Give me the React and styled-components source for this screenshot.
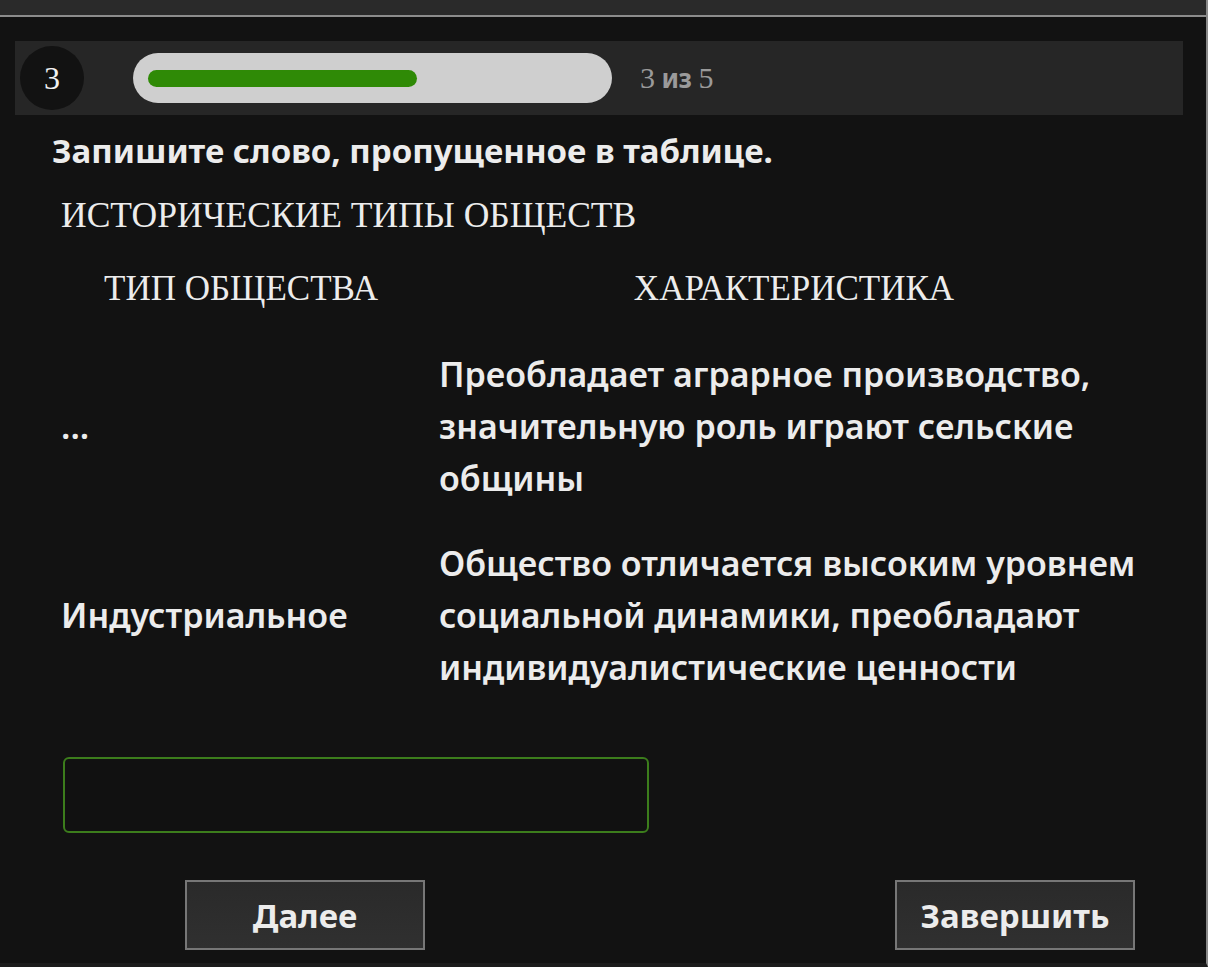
import React from "react";
import styled, { createGlobalStyle } from "styled-components";

const Global = createGlobalStyle`
  html, body { margin: 0; padding: 0; background: #121212; }
  body { font-family: "Noto Sans", "Open Sans", sans-serif; color: #e8e8e8; }
  * { box-sizing: border-box; }
`;

const Page = styled.div`
  width: 1208px;
  height: 967px;
  background: #121212;
  border-right: 2px solid #8a8a8a;
  border-bottom: 4px solid #1c1c1c;
  display: flex;
  flex-direction: column;
  overflow: hidden;
`;

const TopStrip = styled.div`
  height: 17px;
  flex: none;
  background: #2a2a2a;
  border-bottom: 2px solid #8c8c8c;
`;

const Content = styled.div`
  display: flex;
  flex-direction: column;
  padding: 24px 23px 0 15px;
`;

const Header = styled.div`
  height: 74px;
  background: #262626;
  display: flex;
  align-items: center;
  padding: 0 0 0 5px;
`;

const Circle = styled.div`
  width: 64px;
  height: 64px;
  border-radius: 50%;
  background: #121212;
  display: flex;
  align-items: center;
  justify-content: center;
  font-family: "Liberation Serif", serif;
  font-size: 32px;
  color: #f2f2f2;
`;

const Track = styled.div`
  margin-left: 49px;
  width: 479px;
  height: 50px;
  border-radius: 25px;
  background: #cfcfcf;
  display: flex;
  align-items: center;
  padding: 0 15px;
`;

const Fill = styled.div`
  height: 17px;
  border-radius: 9px;
  background: #2f8a06;
`;

const Counter = styled.div`
  margin-left: 28px;
  font-family: "Liberation Serif", serif;
  font-size: 30px;
  color: #9a9a9a;
  letter-spacing: -0.5px;
  b { font-family: "Noto Sans", sans-serif; font-weight: 700; font-size: 26px; }
`;

const Title = styled.div`
  margin: 14px 0 0 37px;
  font-size: 33px;
  font-weight: 700;
  line-height: 44px;
  color: #ececec;
`;

const Subtitle = styled.div`
  margin: 20px 0 0 46px;
  font-family: "Liberation Serif", serif;
  font-size: 35.5px;
  line-height: 44px;
  color: #ececec;
`;

const Table = styled.div`
  margin: 27px 0 0 37px;
  width: 1106px;
  display: grid;
  grid-template-columns: 378px 1fr;
  row-gap: 33px;
`;

const HeadCell = styled.div`
  padding: 0 9px;
  text-align: center;
  font-family: "Liberation Serif", serif;
  font-size: 35px;
  line-height: 50px;
  color: #ececec;
  margin-bottom: 1px;
`;

const Cell = styled.div`
  padding: 0 9px;
  display: flex;
  align-items: center;
  font-size: 34px;
  font-weight: 600;
  line-height: 52px;
  color: #ececec;
`;

const AnswerBox = styled.input`
  margin: 64px 0 0 48px;
  width: 586px;
  height: 76px;
  border: 2px solid #3c7d1c;
  border-radius: 6px;
  background: #111111;
  outline: none;
  color: #ececec;
  font-size: 28px;
  padding: 0 14px;
`;

const Buttons = styled.div`
  margin: 47px 0 0 170px;
  width: 950px;
  display: flex;
  justify-content: space-between;
`;

const Button = styled.button`
  width: 240px;
  height: 70px;
  background: linear-gradient(#2a2a2a, #303030);
  border: 2px solid #777777;
  color: #ececec;
  font-family: "Noto Sans", sans-serif;
  font-size: 33px;
  font-weight: 700;
  cursor: pointer;
  padding: 0;
`;

export default function App() {
  const current = 3;
  const total = 5;
  const rows = [
    {
      type: "...",
      desc: "Преобладает аграрное производство, значительную роль играют сельские общины",
    },
    {
      type: "Индустриальное",
      desc: "Общество отличается высоким уровнем социальной динамики, преобладают индивидуалистические ценности",
    },
  ];
  return (
    <>
      <Global />
      <Page>
        <TopStrip />
        <Content>
          <Header>
            <Circle>{current}</Circle>
            <Track>
              <Fill style={{ width: `${(269 / 449) * 100}%` }} />
            </Track>
            <Counter>
              {current} <b>из</b> {total}
            </Counter>
          </Header>
          <Title>Запишите слово, пропущенное в таблице.</Title>
          <Subtitle>ИСТОРИЧЕСКИЕ ТИПЫ ОБЩЕСТВ</Subtitle>
          <Table>
            <HeadCell>ТИП ОБЩЕСТВА</HeadCell>
            <HeadCell>ХАРАКТЕРИСТИКА</HeadCell>
            {rows.map((r, i) => (
              <React.Fragment key={i}>
                <Cell>{r.type}</Cell>
                <Cell>{r.desc}</Cell>
              </React.Fragment>
            ))}
          </Table>
          <AnswerBox type="text" />
          <Buttons>
            <Button>Далее</Button>
            <Button>Завершить</Button>
          </Buttons>
        </Content>
      </Page>
    </>
  );
}
